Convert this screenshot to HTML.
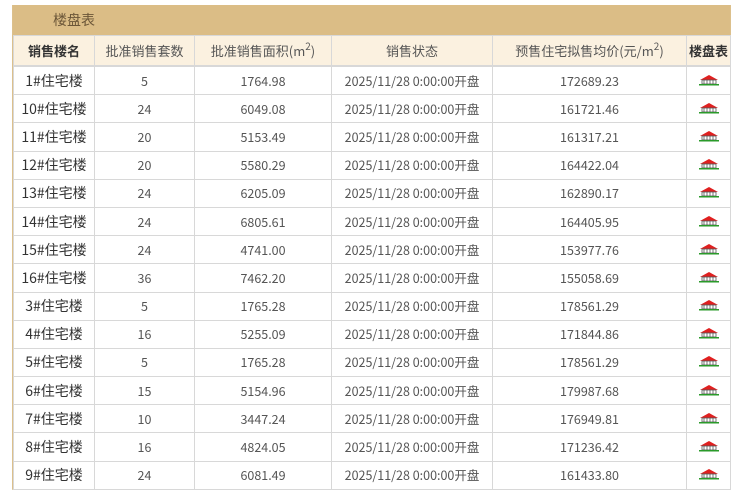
<!DOCTYPE html>
<html><head><meta charset="utf-8"><style>
body{margin:0;background:#fff;font-family:"Noto Sans CJK SC","Liberation Sans",sans-serif;}
.box{position:absolute;left:12px;top:5px;width:717px;height:484px;border-left:1px solid #dcc08c;border-right:1px solid #dcc08c;border-bottom:1px solid #e8dcc4;}
.title{height:30px;background:#dbbd86;color:#6b5638;font-size:14px;line-height:30px;padding-left:40px;}
table{border-collapse:collapse;width:717px;table-layout:fixed;}
td,th{border:1px solid #d8d8d8;text-align:center;font-size:12.5px;color:#555;height:27px;padding:0;font-weight:normal;white-space:nowrap;line-height:16px}
th{background:#fbf1e0;height:29px;font-size:13px}
th.b{font-weight:bold;color:#333}
tr td:first-child{color:#333;font-size:14px}
sup{font-size:10px;vertical-align:6px;line-height:0}
</style></head><body>
<div class="box">
<div class="title">楼盘表</div>
<table>
<colgroup><col style="width:81px"><col style="width:100px"><col style="width:137px"><col style="width:161px"><col style="width:194px"><col style="width:44px"></colgroup>
<tr><th class="b">销售楼名</th><th>批准销售套数</th><th>批准销售面积(m<sup>2</sup>)</th><th>销售状态</th><th>预售住宅拟售均价(元/m<sup>2</sup>)</th><th class="b">楼盘表</th></tr>
</table>
<table id="t">
<colgroup><col style="width:81px"><col style="width:100px"><col style="width:137px"><col style="width:161px"><col style="width:194px"><col style="width:44px"></colgroup>
</table>
</div>
<script>
var d=[["1#住宅楼",5,"1764.98","172689.23"],["10#住宅楼",24,"6049.08","161721.46"],["11#住宅楼",20,"5153.49","161317.21"],["12#住宅楼",20,"5580.29","164422.04"],["13#住宅楼",24,"6205.09","162890.17"],["14#住宅楼",24,"6805.61","164405.95"],["15#住宅楼",24,"4741.00","153977.76"],["16#住宅楼",36,"7462.20","155058.69"],["3#住宅楼",5,"1765.28","178561.29"],["4#住宅楼",16,"5255.09","171844.86"],["5#住宅楼",5,"1765.28","178561.29"],["6#住宅楼",15,"5154.96","179987.68"],["7#住宅楼",10,"3447.24","176949.81"],["8#住宅楼",16,"4824.05","171236.42"],["9#住宅楼",24,"6081.49","161433.80"]];
var ic='<svg width="22" height="12" viewBox="0 0 22 12"><path d="M2 6 L11 1 L20 6 Z" fill="#e02020"/><rect x="4" y="6" width="14" height="4" fill="#fff" stroke="#555" stroke-width="0.8"/><path d="M6 6v4M9 6v4M12 6v4M15 6v4" stroke="#555" stroke-width="0.8"/><rect x="1" y="10" width="20" height="1.5" fill="#2a9a2a"/></svg>';
var h='';d.forEach(function(r){h+='<tr style="height:28.2px"><td>'+r[0]+'</td><td>'+r[1]+'</td><td>'+r[2]+'</td><td>2025/11/28 0:00:00开盘</td><td>'+r[3]+'</td><td>'+ic+'</td></tr>';});
document.getElementById('t').insertAdjacentHTML('beforeend',h);
</script>
</body></html>
